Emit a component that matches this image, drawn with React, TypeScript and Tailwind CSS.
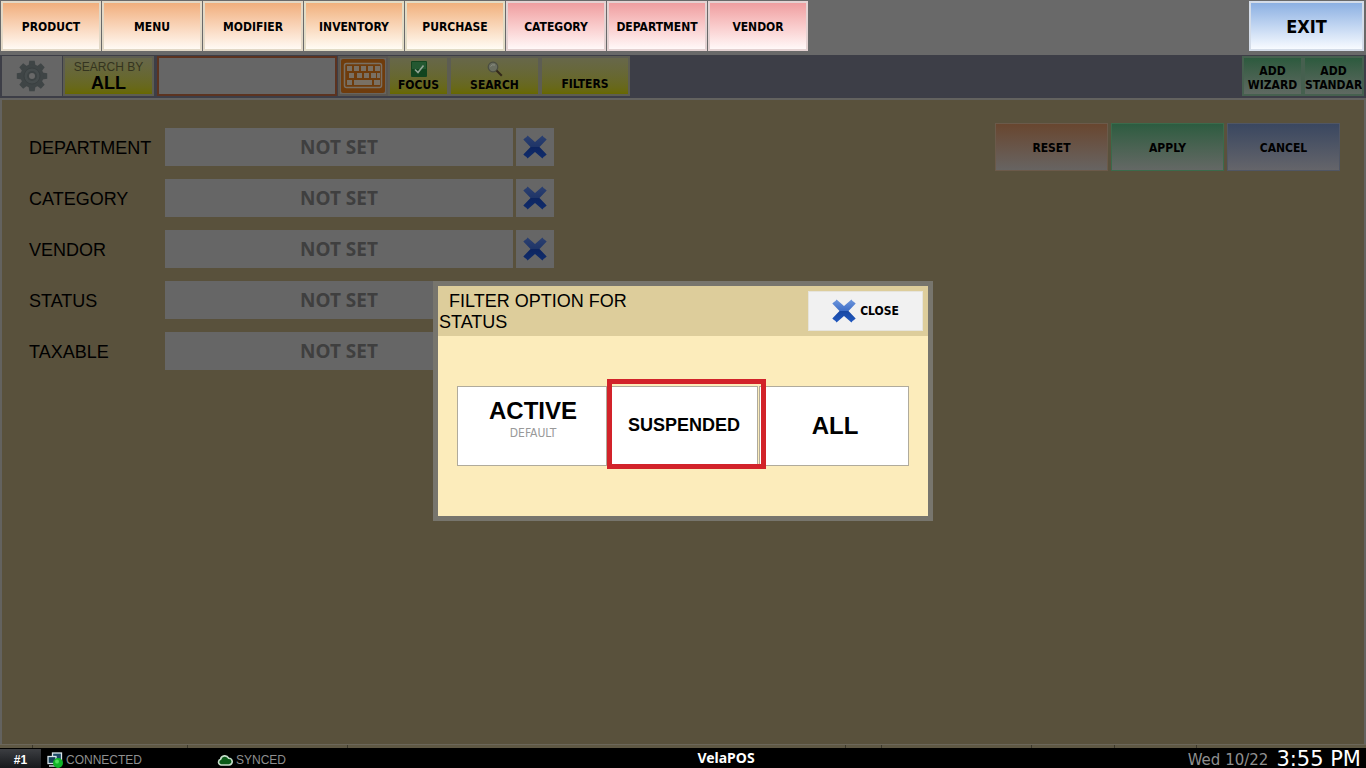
import React from "react";
import clsx from "clsx";

const TAHOMA = "font-['DejaVu_Sans_Condensed','Noto_Sans',sans-serif]";
const SEGOE = "font-['Noto_Sans',sans-serif]";

const ORANGE = "bg-linear-to-b from-[#f0ae7c] to-[#fffaf4] border-[#e2d8c6]";
const AMBER = "bg-linear-to-b from-[#f0b07c] to-[#fffcf4] border-[#e2dcc6]";
const PINK = "bg-linear-to-b from-[#ef9ea0] to-[#fff8f8] border-[#e4d2d2]";

const TABS = [
  { label: "PRODUCT", tone: ORANGE },
  { label: "MENU", tone: ORANGE },
  { label: "MODIFIER", tone: ORANGE },
  { label: "INVENTORY", tone: AMBER },
  { label: "PURCHASE", tone: AMBER },
  { label: "CATEGORY", tone: PINK },
  { label: "DEPARTMENT", tone: PINK },
  { label: "VENDOR", tone: PINK },
];

const FILTERS = ["DEPARTMENT", "CATEGORY", "VENDOR", "STATUS", "TAXABLE"];

const ACTIONS = [
  { label: "RESET", tone: "from-[#68462f] to-[#676462] border-[#6b5a4a]" },
  { label: "APPLY", tone: "from-[#2c5c40] to-[#646865] border-[#3b6a4b]" },
  { label: "CANCEL", tone: "from-[#3a4760] to-[#65656a] border-[#505664]" },
];

const YELLOW =
  "h-10 border-2 border-[#5d5d52] bg-linear-to-b from-[#67674a] to-[#686800] text-black";
const GREEN =
  "h-10 w-[61px] overflow-hidden border-2 border-[#46604f] bg-linear-to-b from-[#2c5a3e] to-[#5f6962] pt-[3px] text-black";
const OPTION = "h-20 w-[150px] border border-[#b0ab9c] bg-white pl-[2px]";

// Widths between the tick marks along the bottom strip
const TICKS = [33, 155, 160, 498, 36, 150, 83, 82];

interface CrossIconProps {
  id: string;
  dim?: boolean;
}

const CrossIcon: React.FC<CrossIconProps> = ({ id, dim }) => (
  <svg viewBox="0 0 24 24" className="size-6 shrink-0" aria-hidden="true">
    <defs>
      <linearGradient id={id} x1="0" y1="0" x2="0" y2="1">
        <stop offset="0" stopColor={dim ? "#2c4070" : "#6f97dc"} />
        <stop offset="0.48" stopColor={dim ? "#1f3568" : "#3f6fc8"} />
        <stop offset="0.52" stopColor={dim ? "#0d2560" : "#1848a4"} />
        <stop offset="1" stopColor={dim ? "#102c6c" : "#2058c0"} />
      </linearGradient>
    </defs>
    <path
      d="M4.5 0.5 12 7 19.5 0.5 20.5 2 22 3 23.7 4.5 16.5 12 23.7 19.5 22 21 20.5 22 19.5 23.5 12 17 4.5 23.5 3.5 22 2 21 0.3 19.5 7.5 12 0.3 4.5 2 3 3.5 2Z"
      fill={`url(#${id})`}
    />
  </svg>
);

const GearIcon = () => (
  <svg viewBox="0 0 32 32" className="size-8" aria-hidden="true">
    <g fill="#3f4546">
      {[0, 45, 90, 135, 180, 225, 270, 315].map((a) => (
        <path key={a} d="M12.5 6 13.3 0.8H18.7L19.5 6Z" transform={`rotate(${a} 16 16)`} />
      ))}
      <circle cx="16" cy="16" r="11.5" />
    </g>
    <circle cx="16" cy="16" r="8" fill="#464c4d" stroke="#3a4041" />
    <circle cx="16" cy="16" r="5" fill="#3d4344" />
    <circle cx="16" cy="16" r="3" fill="#686868" />
  </svg>
);

const KEYS = [
  [5, 7], [12, 7], [19, 7], [26, 7], [33, 7],
  [7, 14], [15, 14], [22, 14], [29, 14],
];

const KeyboardIcon = () => (
  <svg viewBox="0 0 44 34" className="h-[34px] w-11" aria-hidden="true">
    <rect width="44" height="34" rx="2" fill="#6f3c0c" />
    <rect x="3.5" y="4.5" width="37" height="24" rx="2" fill="none" stroke="#797064" strokeWidth="1.5" />
    <g fill="#797064">
      {KEYS.map(([x, y]) => (
        <rect key={`${x}-${y}`} x={x + 1} y={y} width="5" height="5" />
      ))}
      <rect x="36" y="14" width="3" height="5" />
      <rect x="6" y="21" width="5" height="5" />
      <rect x="13" y="21" width="18" height="5" />
      <rect x="33" y="21" width="6" height="5" />
    </g>
  </svg>
);

const CheckIcon = () => (
  <svg viewBox="0 0 16 16" className="size-4" aria-hidden="true">
    <rect width="16" height="16" rx="1" fill="#12441f" />
    <rect x="1" y="1" width="14" height="7" fill="#245831" />
    <path d="M4 8.5 7 11.5 12.5 4.5" fill="none" stroke="#91a394" strokeWidth="1.6" />
  </svg>
);

const SearchIcon = () => (
  <svg viewBox="0 0 16 16" className="size-4" aria-hidden="true">
    <circle cx="6" cy="6" r="4.8" fill="#6a6e60" stroke="#4a4d42" strokeWidth="1.2" />
    <path d="M3.5 5.5Q5 3 8 4" fill="none" stroke="#8b8f84" />
    <path d="M9.5 9.5 14.8 14.8" stroke="#33281a" strokeWidth="2" />
  </svg>
);

const NetworkIcon = () => (
  <svg viewBox="0 0 16 16" className="size-4" aria-hidden="true">
    <rect x="5.5" y="1" width="9" height="8" fill="#1c4864" stroke="#d8e4ea" strokeWidth="1.3" />
    <rect x="1" y="4.5" width="8" height="7" fill="#164058" stroke="#d8e4ea" strokeWidth="1.3" />
    <path d="M2 14H8" stroke="#c8d4da" strokeWidth="1.5" />
    <circle cx="11" cy="11" r="5" fill="#10b428" />
    <circle cx="10" cy="9.5" r="2" fill="#4fe05c" />
  </svg>
);

const CloudIcon = () => (
  <svg viewBox="0 0 16 12" className="h-3 w-4" aria-hidden="true">
    <path
      d="M4 11A3 3 0 0 1 3.6 5.2 4.3 4.3 0 0 1 11.6 4.2 3.4 3.4 0 0 1 12 11Z"
      fill="#0a5a18"
      stroke="#c4dcc8"
      strokeWidth="1.6"
    />
  </svg>
);

const TopBar = () => (
  <nav className={clsx("flex h-[55px] items-start justify-between bg-[#696969] p-px pr-[2px]", TAHOMA)}>
    <div className="flex gap-px">
      {TABS.map((tab) => (
        <button
          key={tab.label}
          className={clsx("h-[50px] w-[100px] border-2 pt-[2px] text-[12px] font-bold text-black", tab.tone)}
        >
          {tab.label}
        </button>
      ))}
    </div>
    <button className="h-[50px] w-[115px] border-2 border-[#d4dce8] bg-linear-to-b from-[#8cb0e2] to-[#f8fbff] text-[18px] font-bold text-black">
      EXIT
    </button>
  </nav>
);

const Toolbar = () => (
  <div
    className={clsx(
      "flex h-[45px] items-start justify-between border-b-2 border-[#63625f] bg-[#3d3e47] pt-px pr-[2px] pl-[2px] text-[12px] leading-[14px] font-bold",
      TAHOMA,
    )}
  >
    <div className="flex">
      <button aria-label="Settings" className="flex h-10 w-[60px] items-center justify-center bg-[#666]">
        <GearIcon />
      </button>
      <button className={clsx(YELLOW, "ml-px w-[91px] font-['Liberation_Sans',sans-serif]")}>
        <span className="block text-[12px] leading-[14px] font-normal text-[#34341f]">SEARCH BY</span>
        <span className="block text-[18px] leading-[18px]">ALL</span>
      </button>
      <input
        aria-label="Search products"
        className="ml-[3px] h-10 w-[180px] border-2 border-[#5c3320] bg-[#666] px-2 text-black outline-none"
      />
      <button
        aria-label="Keyboard"
        className="ml-px flex h-10 w-[50px] items-center justify-center border-2 border-[#5a5650] bg-[#68645e]"
      >
        <KeyboardIcon />
      </button>
      <button className={clsx(YELLOW, "flex w-[61px] flex-col items-center justify-end pb-[2px]")}>
        <CheckIcon />
        <span className="mt-px">FOCUS</span>
      </button>
      <button className={clsx(YELLOW, "flex w-[91px] flex-col items-center justify-end pb-[2px]")}>
        <SearchIcon />
        <span className="mt-px">SEARCH</span>
      </button>
      <button className={clsx(YELLOW, "flex w-[90px] flex-col items-center justify-end pb-[3px]")}>
        FILTERS
      </button>
    </div>
    <div className="flex">
      <button className={GREEN}>
        ADD
        <br />
        WIZARD
      </button>
      <button className={GREEN}>
        ADD
        <br />
        STANDAR
      </button>
    </div>
  </div>
);

const FilterForm = () => (
  <div className="flex flex-col gap-[13px]">
    {FILTERS.map((label) => (
      <div key={label} className="flex h-[38px] items-center">
        <span id={`label-${label}`} className="w-[136px] pt-[2px] text-[18px] text-black">
          {label}
        </span>
        <button
          aria-labelledby={`label-${label}`}
          className={clsx("h-[38px] w-[348px] bg-[#666] pt-px text-[19px] font-bold text-[#3f3f3f]", SEGOE)}
        >
          NOT SET
        </button>
        <button
          aria-label={`Clear ${label}`}
          className="ml-[3px] flex size-[38px] items-center justify-center bg-[#666]"
        >
          <CrossIcon id={`cross-${label}`} dim />
        </button>
      </div>
    ))}
  </div>
);

const StatusDialog = () => (
  <div
    role="dialog"
    aria-labelledby="dialog-title"
    className="h-60 w-[500px] border-5 border-[#77756d] bg-[#fcecbb]"
  >
    <div className="flex h-[50px] items-start justify-between bg-[#ddcd9b] pt-[5px] pr-[5px] pl-px">
      <h2 id="dialog-title" className="w-[210px] indent-[10px] text-[18px] leading-[21px] text-black">
        FILTER OPTION FOR STATUS
      </h2>
      <button
        className={clsx(
          "flex h-10 w-[115px] items-center justify-center gap-1 border border-[#e6e4dc] bg-[#f1f1f1] text-[12px] font-bold text-black",
          TAHOMA,
        )}
      >
        <CrossIcon id="cross-close" />
        <span className="pt-px">CLOSE</span>
      </button>
    </div>
    <div className="flex justify-center gap-px pt-[50px] font-bold text-black">
      <button className={clsx(OPTION, "flex flex-col items-center pt-[10px] text-[24px] leading-[28px]")}>
        ACTIVE
        <span className={clsx("text-[12px] leading-4 font-normal text-[#999]", TAHOMA)}>DEFAULT</span>
      </button>
      <div className="relative">
        <button className={clsx(OPTION, "text-[18px]")}>SUSPENDED</button>
        <div className="pointer-events-none absolute -top-[7px] -right-2 -bottom-[3px] -left-px z-10 border-5 border-[#d2232a]" />
      </div>
      <button className={clsx(OPTION, "text-[24px]")}>ALL</button>
    </div>
  </div>
);

const StatusBar = () => (
  <footer className="grid h-5 grid-cols-3 bg-black text-[12px] text-[#8f8f8f]">
    <div className="flex items-center">
      <span className="flex h-5 w-[41px] items-center justify-center bg-linear-to-b from-[#3c3e42] to-[#15171a] pt-[3px] font-bold text-white">
        #1
      </span>
      <span className="flex w-[176px] items-center gap-[3px] pt-[3px] pl-[6px]">
        <NetworkIcon />
        CONNECTED
      </span>
      <span className="flex items-center gap-[3px] pt-[3px]">
        <CloudIcon />
        SYNCED
      </span>
    </div>
    <div className={clsx("pl-[86px] text-center text-[14px] leading-5 font-bold text-white", SEGOE)}>VelaPOS</div>
    <div className="flex items-center justify-end gap-2 pr-[5px] font-['DejaVu_Sans',sans-serif] whitespace-nowrap">
      <span className="pt-[3px] text-[15px] leading-[17px]">Wed 10/22</span>
      <span className="text-[21px] leading-5 text-white">3:55 PM</span>
    </div>
  </footer>
);

export default function App() {
  return (
    <div className="flex min-h-screen flex-col bg-[#59513c] font-['Liberation_Sans',sans-serif]">
      <TopBar />
      <div className="relative flex flex-1 flex-col">
        <Toolbar />
        <main className="flex flex-1 items-start justify-between border-x-2 border-[#63625f] pt-[23px] pr-6 pl-[27px]">
          <div className="pt-[5px]">
            <FilterForm />
          </div>
          <div className={clsx("flex gap-[3px]", TAHOMA)}>
            {ACTIONS.map((action) => (
              <button
                key={action.label}
                className={clsx(
                  "h-12 w-[113px] border bg-linear-to-b pt-[2px] text-[12px] font-bold text-black",
                  action.tone,
                )}
              >
                {action.label}
              </button>
            ))}
          </div>
        </main>
        <div className="flex h-1 overflow-hidden border-t border-[#6c675a] bg-[#5f5844]">
          {TICKS.map((width, i) => (
            <span key={i} className="border-r border-[#3c382b]" style={{ width }} />
          ))}
        </div>
        <div className="absolute inset-0 flex items-center justify-center pb-[2px]">
          <StatusDialog />
        </div>
      </div>
      <StatusBar />
    </div>
  );
}
